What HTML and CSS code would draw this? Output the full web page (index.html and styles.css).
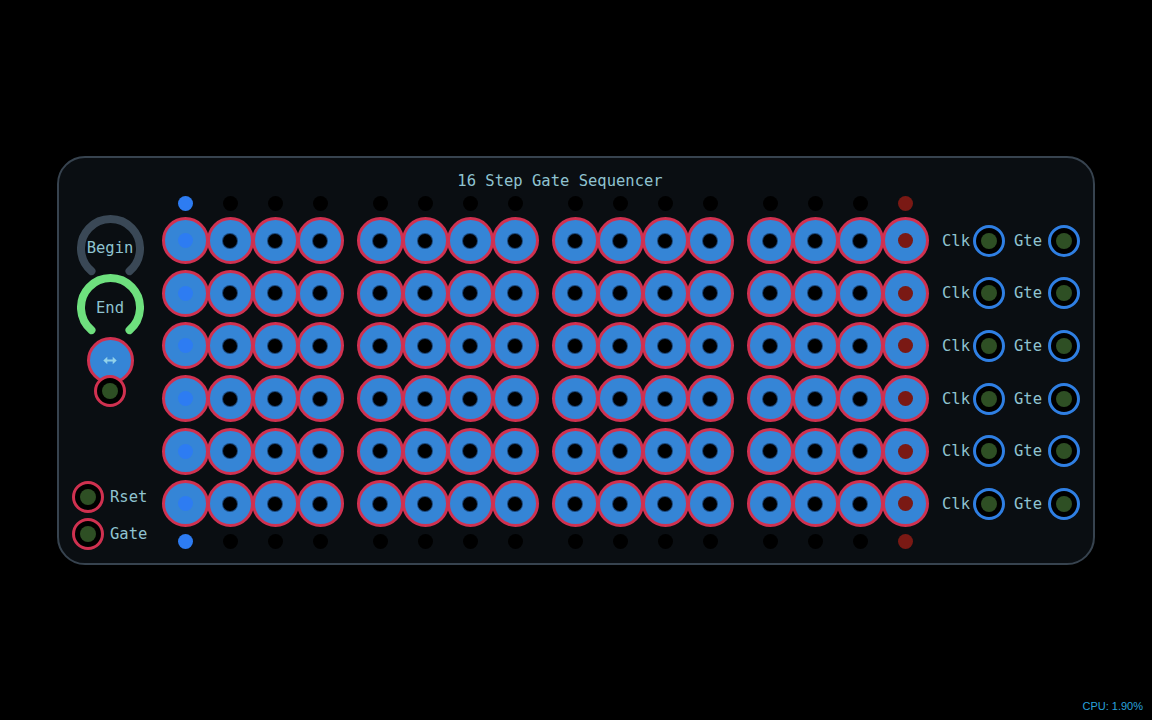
FILE: index.html
```html
<!DOCTYPE html>
<html>
<head>
<meta charset="utf-8">
<link rel="stylesheet" href="styles.css">
</head>
<body>
<div class="panel">
  <div class="title">16 Step Gate Sequencer</div>
  <div class="body">
    <div class="left">
      <div class="knob">
        <svg viewBox="0 0 67 67" width="67" height="67"><path d="M14.5 56.1 A29.5 29.5 0 1 1 52.5 56.1" fill="none" stroke="#3a4856" stroke-width="8" stroke-linecap="round"/></svg>
        <span class="klabel">Begin</span>
      </div>
      <div class="knob end">
        <svg viewBox="0 0 67 67" width="67" height="67"><path d="M14.5 56.1 A29.5 29.5 0 1 1 52.5 56.1" fill="none" stroke="#6ee07e" stroke-width="8" stroke-linecap="round"/></svg>
        <span class="klabel">End</span>
      </div>
      <div class="swap">
        <svg viewBox="0 0 14 9" width="14" height="9"><path d="M0.3 4.5 L4.3 0.8 L4.3 3.4 L9.7 3.4 L9.7 0.8 L13.7 4.5 L9.7 8.2 L9.7 5.6 L4.3 5.6 L4.3 8.2 Z" fill="#92d2ea"/></svg>
      </div>
      <div class="port red swap-port"><i></i></div>
      <div class="io">
        <div class="iorow"><div class="port red"><i></i></div><span>Rset</span></div>
        <div class="iorow"><div class="port red"><i></i></div><span>Gate</span></div>
      </div>
    </div>
    <div class="main">
      <div class="group">
        <b class="dot blue"></b><b class="dot"></b><b class="dot"></b><b class="dot"></b>
        <span class="btn first"><i></i></span><span class="btn"><i></i></span><span class="btn"><i></i></span><span class="btn"><i></i></span>
        <span class="btn first"><i></i></span><span class="btn"><i></i></span><span class="btn"><i></i></span><span class="btn"><i></i></span>
        <span class="btn first"><i></i></span><span class="btn"><i></i></span><span class="btn"><i></i></span><span class="btn"><i></i></span>
        <span class="btn first"><i></i></span><span class="btn"><i></i></span><span class="btn"><i></i></span><span class="btn"><i></i></span>
        <span class="btn first"><i></i></span><span class="btn"><i></i></span><span class="btn"><i></i></span><span class="btn"><i></i></span>
        <span class="btn first"><i></i></span><span class="btn"><i></i></span><span class="btn"><i></i></span><span class="btn"><i></i></span>
        <b class="dot blue"></b><b class="dot"></b><b class="dot"></b><b class="dot"></b>
      </div>
      <div class="group">
        <b class="dot"></b><b class="dot"></b><b class="dot"></b><b class="dot"></b>
        <span class="btn"><i></i></span><span class="btn"><i></i></span><span class="btn"><i></i></span><span class="btn"><i></i></span>
        <span class="btn"><i></i></span><span class="btn"><i></i></span><span class="btn"><i></i></span><span class="btn"><i></i></span>
        <span class="btn"><i></i></span><span class="btn"><i></i></span><span class="btn"><i></i></span><span class="btn"><i></i></span>
        <span class="btn"><i></i></span><span class="btn"><i></i></span><span class="btn"><i></i></span><span class="btn"><i></i></span>
        <span class="btn"><i></i></span><span class="btn"><i></i></span><span class="btn"><i></i></span><span class="btn"><i></i></span>
        <span class="btn"><i></i></span><span class="btn"><i></i></span><span class="btn"><i></i></span><span class="btn"><i></i></span>
        <b class="dot"></b><b class="dot"></b><b class="dot"></b><b class="dot"></b>
      </div>
      <div class="group">
        <b class="dot"></b><b class="dot"></b><b class="dot"></b><b class="dot"></b>
        <span class="btn"><i></i></span><span class="btn"><i></i></span><span class="btn"><i></i></span><span class="btn"><i></i></span>
        <span class="btn"><i></i></span><span class="btn"><i></i></span><span class="btn"><i></i></span><span class="btn"><i></i></span>
        <span class="btn"><i></i></span><span class="btn"><i></i></span><span class="btn"><i></i></span><span class="btn"><i></i></span>
        <span class="btn"><i></i></span><span class="btn"><i></i></span><span class="btn"><i></i></span><span class="btn"><i></i></span>
        <span class="btn"><i></i></span><span class="btn"><i></i></span><span class="btn"><i></i></span><span class="btn"><i></i></span>
        <span class="btn"><i></i></span><span class="btn"><i></i></span><span class="btn"><i></i></span><span class="btn"><i></i></span>
        <b class="dot"></b><b class="dot"></b><b class="dot"></b><b class="dot"></b>
      </div>
      <div class="group">
        <b class="dot"></b><b class="dot"></b><b class="dot"></b><b class="dot red"></b>
        <span class="btn"><i></i></span><span class="btn"><i></i></span><span class="btn"><i></i></span><span class="btn last"><i></i></span>
        <span class="btn"><i></i></span><span class="btn"><i></i></span><span class="btn"><i></i></span><span class="btn last"><i></i></span>
        <span class="btn"><i></i></span><span class="btn"><i></i></span><span class="btn"><i></i></span><span class="btn last"><i></i></span>
        <span class="btn"><i></i></span><span class="btn"><i></i></span><span class="btn"><i></i></span><span class="btn last"><i></i></span>
        <span class="btn"><i></i></span><span class="btn"><i></i></span><span class="btn"><i></i></span><span class="btn last"><i></i></span>
        <span class="btn"><i></i></span><span class="btn"><i></i></span><span class="btn"><i></i></span><span class="btn last"><i></i></span>
        <b class="dot"></b><b class="dot"></b><b class="dot"></b><b class="dot red"></b>
      </div>
    </div>
    <div class="right">
      <div class="orow"><span>Clk</span><div class="port blue"><i></i></div><span class="gte">Gte</span><div class="port blue"><i></i></div></div>
      <div class="orow"><span>Clk</span><div class="port blue"><i></i></div><span class="gte">Gte</span><div class="port blue"><i></i></div></div>
      <div class="orow"><span>Clk</span><div class="port blue"><i></i></div><span class="gte">Gte</span><div class="port blue"><i></i></div></div>
      <div class="orow"><span>Clk</span><div class="port blue"><i></i></div><span class="gte">Gte</span><div class="port blue"><i></i></div></div>
      <div class="orow"><span>Clk</span><div class="port blue"><i></i></div><span class="gte">Gte</span><div class="port blue"><i></i></div></div>
      <div class="orow"><span>Clk</span><div class="port blue"><i></i></div><span class="gte">Gte</span><div class="port blue"><i></i></div></div>
    </div>
  </div>
</div>
<div class="cpu">CPU: 1.90%</div>
</body>
</html>
```
FILE: styles.css
```css
html, body {
  margin: 0;
  padding: 0;
  background: #000;
}
body {
  width: 1152px;
  height: 720px;
  display: flex;
  align-items: center;
  justify-content: center;
  font-family: "DejaVu Sans Mono", "Liberation Mono", monospace;
  color: #8fc3d0;
  position: relative;
  overflow: hidden;
}
.panel {
  box-sizing: border-box;
  width: 1038px;
  height: 409px;
  border: 2px solid #37434f;
  border-radius: 28px;
  background: #0a0e12;
  padding-top: 14px;
  display: flex;
  flex-direction: column;
}
.title {
  height: 20px;
  line-height: 18px;
  font-size: 15.5px;
  text-align: center;
  padding-right: 32px;
}
.body {
  display: flex;
  height: 362px;
}
.left {
  width: 102px;
  display: flex;
  flex-direction: column;
  align-items: center;
  padding-bottom: 1px;
}
.knob {
  position: relative;
  width: 67px;
  height: 67px;
  margin-top: 23px;
}
.knob svg { display: block; }
.knob.end { margin-top: -8px; }
.klabel {
  position: absolute;
  left: 0;
  right: 0;
  top: 23px;
  text-align: center;
  font-size: 15.5px;
  line-height: 20px;
}
.knob.end .klabel { top: 24px; }
.swap {
  box-sizing: border-box;
  width: 47px;
  height: 47px;
  border-radius: 50%;
  border: 3px solid #d03150;
  background: #3585d6;
  margin-top: -3.5px;
  display: flex;
  align-items: center;
  justify-content: center;
}
.swap svg { display: block; margin-top: -1px; }
.port {
  box-sizing: border-box;
  width: 32px;
  height: 32px;
  border-radius: 50%;
  background: #000;
  display: flex;
  align-items: center;
  justify-content: center;
  flex: none;
}
.port.red { border: 3px solid #d03150; }
.port.blue { border: 3px solid #2f7fe3; }
.port i {
  width: 16px;
  height: 16px;
  border-radius: 50%;
  background: #2e4f24;
}
.swap-port {
  margin-top: -9.5px;
  position: relative;
}
.io {
  margin-top: auto;
  align-self: stretch;
  padding-left: 13px;
}
.iorow {
  height: 37px;
  display: flex;
  align-items: center;
  gap: 6px;
  font-size: 15.5px;
}
.main {
  display: flex;
  gap: 15px;
  margin-left: 1.5px;
}
.group {
  display: grid;
  grid-template-columns: repeat(4, 45px);
  grid-template-rows: 23px repeat(6, 52.6px) 23px;
}
.dot {
  width: 15px;
  height: 15px;
  border-radius: 50%;
  background: #000;
  place-self: center;
}
.dot.blue { background: #2d7cf2; }
.dot.red { background: #7a1914; }
.btn {
  box-sizing: border-box;
  width: 47px;
  height: 47px;
  margin-left: -1px;
  justify-self: start;
  align-self: center;
  border-radius: 50%;
  border: 3px solid #d03150;
  background: #3585d6;
  display: flex;
  align-items: center;
  justify-content: center;
}
.btn i {
  width: 14px;
  height: 14px;
  border-radius: 50%;
  background: #000;
  box-shadow: 0 0 0 1px rgba(10, 30, 60, 0.6);
}
.btn.first i {
  width: 15px;
  height: 15px;
  background: #2d7cf2;
  box-shadow: none;
}
.btn.last i {
  width: 15px;
  height: 15px;
  background: #7a1914;
  box-shadow: none;
}
.right {
  flex: 1;
  padding-top: 23px;
  padding-left: 14.5px;
}
.orow {
  height: 52.6px;
  display: flex;
  align-items: center;
  font-size: 15.5px;
}
.orow span { width: 28px; }
.orow .port { margin-left: 3px; }
.orow .gte { margin-left: 9px; }
.orow .gte + .port { margin-left: 6px; }
.cpu {
  position: absolute;
  right: 9px;
  bottom: 8px;
  font-family: "Liberation Sans", Arial, sans-serif;
  font-size: 11px;
  color: #2aa2dc;
}
```
